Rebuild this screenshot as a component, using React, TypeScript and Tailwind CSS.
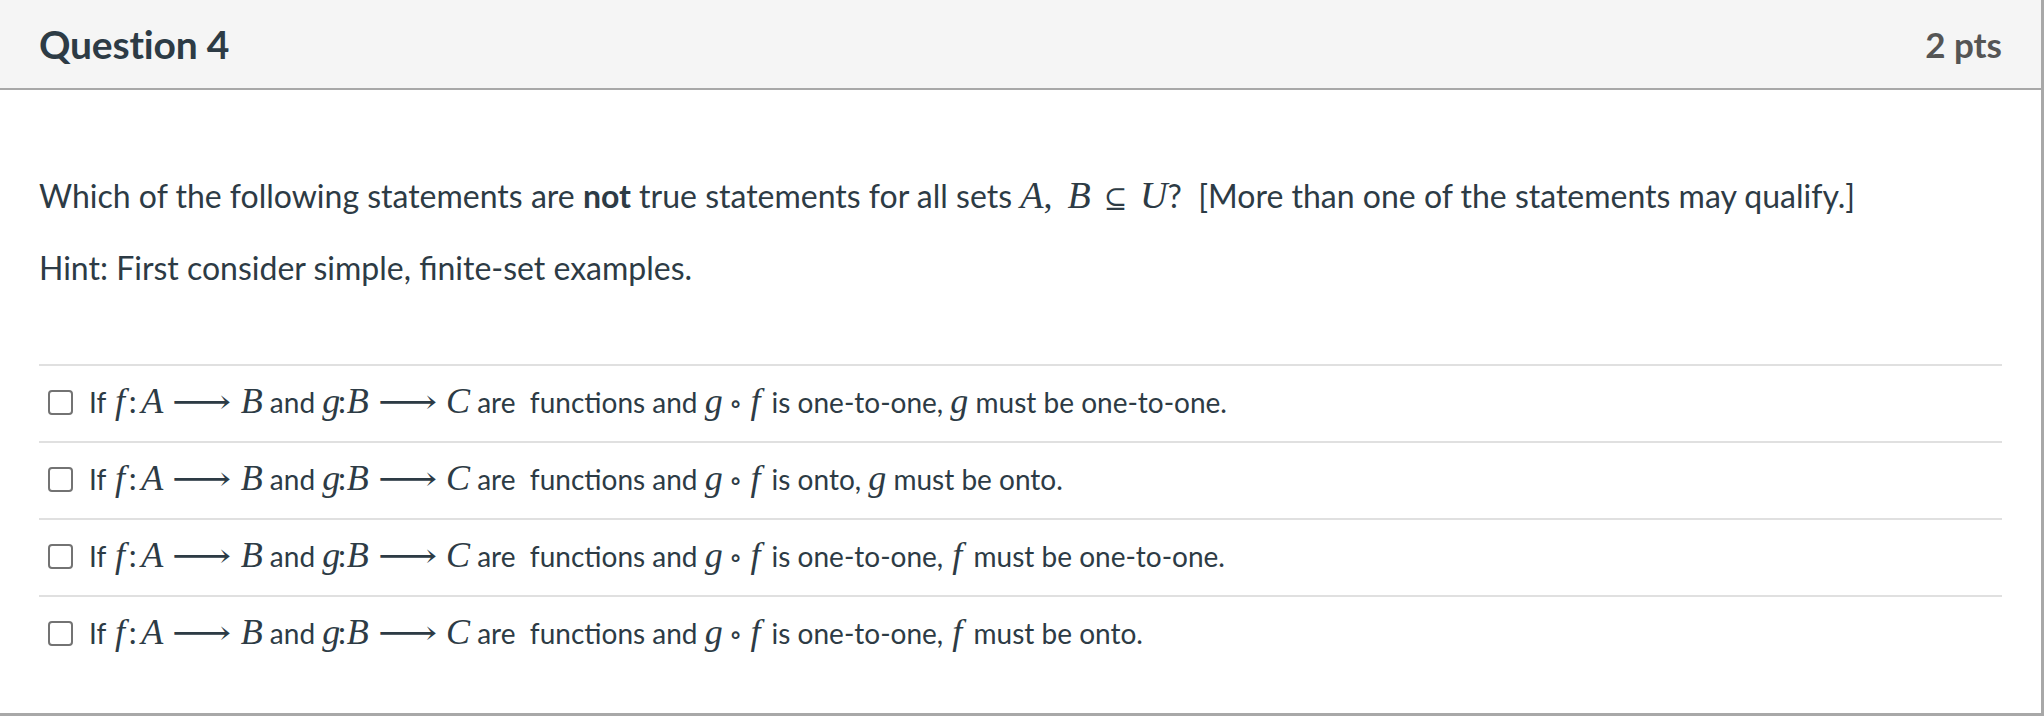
import React from 'react';

// Inline math, set in a serif italic like MathJax output
function M({ children, className = '' }: { children: React.ReactNode; className?: string }) {
  return (
    <span className={`font-['Liberation_Serif',serif] italic text-[36px] leading-none ${className}`}>{children}</span>
  );
}

// Liberation's italic f is much narrower than the TeX one, so pad it a little
function F({ className = 'ml-[2px] mr-[4px]' }: { className?: string }) {
  return <M className={className}>f</M>;
}

function Colon({ className = '' }: { className?: string }) {
  return <span className={`font-['Liberation_Serif',serif] text-[34px] leading-none ${className}`}>:</span>;
}

function Arrow() {
  return (
    <span className="inline-block mx-[15px] scale-x-[1.25] font-['DejaVu_Serif',serif] text-[33px] leading-none">⟶</span>
  );
}

function Op({ children, className = 'mx-[6px]' }: { children: React.ReactNode; className?: string }) {
  return <span className={`font-['DejaVu_Serif',serif] not-italic text-[28px] leading-none ${className}`}>{children}</span>;
}

function FunctionHead() {
  return (
    <>
      If <F className="ml-[2px] mr-[3px]" />
      <Colon className="mr-[4px]" />
      <M>A</M>
      <Arrow />
      <M>B</M> and <M className="-mr-[3px]">g</M>
      <Colon />
      <M>B</M>
      <Arrow />
      <M>C</M>
      {' are \u00a0functions and '}
      <M>g</M>
      <Op>∘</Op>
      <F />
    </>
  );
}

interface Option {
  id: number;
  tail: React.ReactNode;
}

const options: Option[] = [
  { id: 1, tail: <> is one-to-one, <M>g</M> must be one-to-one.</> },
  { id: 2, tail: <> is onto, <M>g</M> must be onto.</> },
  { id: 3, tail: <> is one-to-one, <F /> must be one-to-one.</> },
  { id: 4, tail: <> is one-to-one, <F /> must be onto.</> },
];

export default function App() {
  return (
    <div className="w-[2044px] h-[716px] overflow-hidden bg-white font-['Lato',sans-serif] text-[#2d3b45]">
      <div className="h-[716px] border-r-[3px] border-b-[3px] border-[#a8a8a8] flex flex-col">
        {/* Header */}
        <div className="h-[90px] shrink-0 bg-[#f5f5f5] border-b-2 border-[#a8a8a8] flex items-center justify-between pl-[39px] pr-[39px]">
          <div className="text-[39px] font-bold tracking-[-0.2px]">Question 4</div>
          <div className="text-[35px] font-bold text-[#555]">2 pts</div>
        </div>

        {/* Body */}
        <div className="px-[39px] pt-[86px] text-[32px] leading-[38px]">
          <p>
            Which of the following statements are <strong>not</strong> true statements for all sets{' '}
            <M className="text-[38px]">A</M>
            <span className="font-['Liberation_Serif',serif] text-[36px] leading-none">,</span>
            <span className="inline-block w-[15px]" />
            <M className="text-[38px]">B</M>
            <Op className="mx-[13px]">⊆</Op>
            <M className="text-[38px]">U</M>?{'\u00a0 '}[More than one of the statements may qualify.]
          </p>
          <p className="mt-[34px]">Hint: First consider simple, finite-set examples.</p>

          <div className="mt-[77px] text-[28px]">
            {options.map((o) => (
              <div key={o.id} className="h-[77px] border-t-2 border-[#e0e0e0] flex items-center pb-[3px]">
                <span className="ml-[9px] mr-[16px] w-[25px] h-[25px] shrink-0 rounded-[4px] border-2 border-[#737373] bg-white" />
                <span className="whitespace-nowrap">
                  <FunctionHead />
                  {o.tail}
                </span>
              </div>
            ))}
          </div>
        </div>
      </div>
    </div>
  );
}
